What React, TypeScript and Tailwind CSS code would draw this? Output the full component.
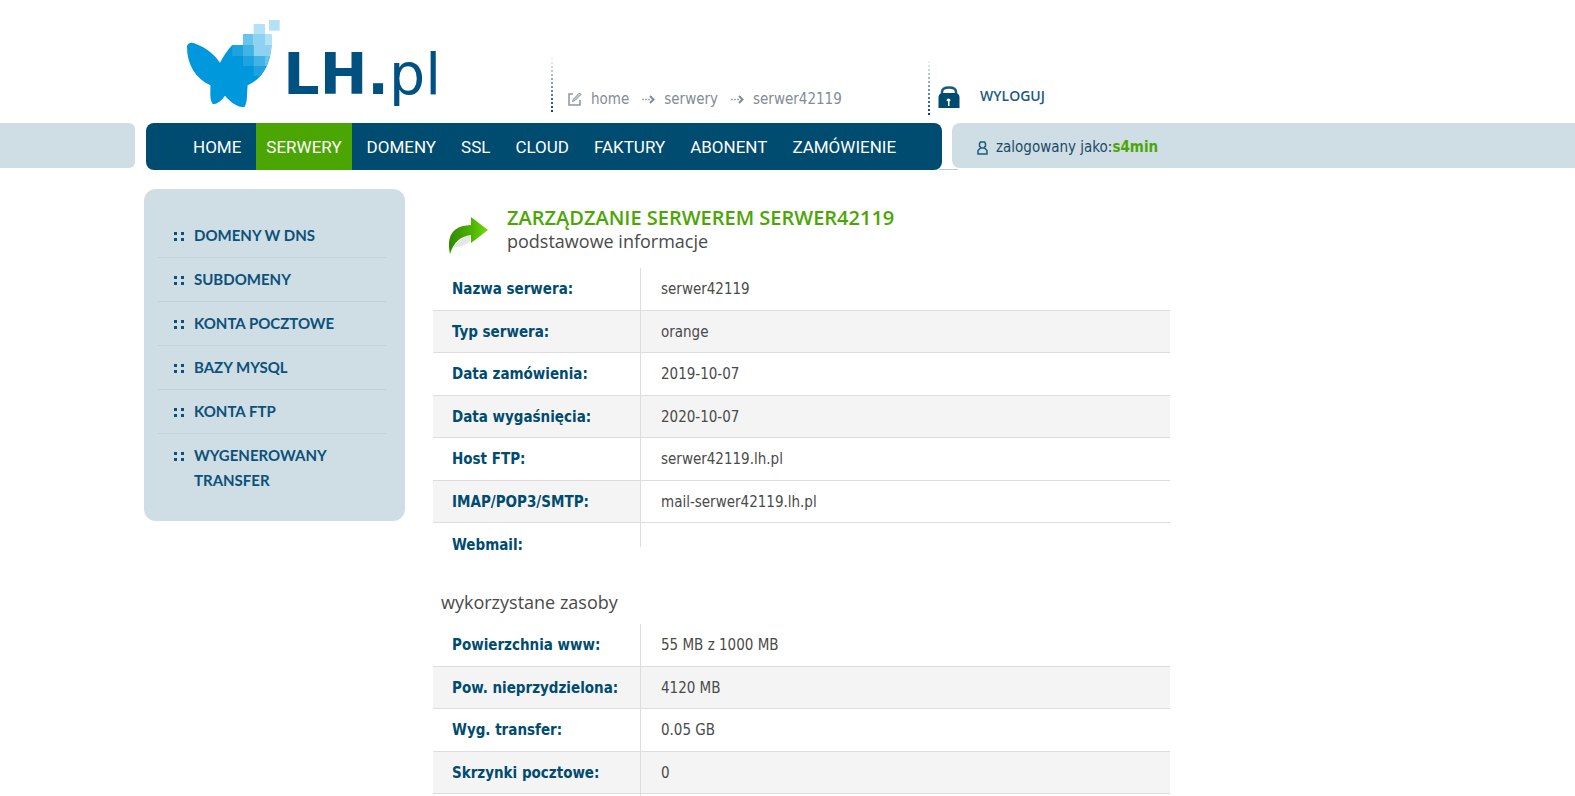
import { ReactNode } from "react";

type InfoRow = {
  label: string;
  value?: string;
  // grey background on the label / on the value
  shaded?: boolean;
  plainValue?: boolean;
};

const navItems = ["HOME", "SERWERY", "DOMENY", "SSL", "CLOUD", "FAKTURY", "ABONENT", "ZAMÓWIENIE"];

const sideItems = [
  "DOMENY W DNS",
  "SUBDOMENY",
  "KONTA POCZTOWE",
  "BAZY MYSQL",
  "KONTA FTP",
  "WYGENEROWANY TRANSFER",
];

const serverInfo: InfoRow[] = [
  { label: "Nazwa serwera:", value: "serwer42119" },
  { label: "Typ serwera:", value: "orange", shaded: true },
  { label: "Data zamówienia:", value: "2019-10-07" },
  { label: "Data wygaśnięcia:", value: "2020-10-07", shaded: true },
  { label: "Host FTP:", value: "serwer42119.lh.pl" },
  { label: "IMAP/POP3/SMTP:", value: "mail-serwer42119.lh.pl", shaded: true, plainValue: true },
  { label: "Webmail:" },
];

const usageInfo: InfoRow[] = [
  { label: "Powierzchnia www:", value: "55 MB z 1000 MB" },
  { label: "Pow. nieprzydzielona:", value: "4120 MB", shaded: true },
  { label: "Wyg. transfer:", value: "0.05 GB" },
  { label: "Skrzynki pocztowe:", value: "0", shaded: true },
  { label: "", value: "" },
];

const Logo = () => (
  <svg className="h-[89px] w-[259px]" viewBox="48 27 777 267" role="img" aria-label="LH.pl">
    <defs>
      <clipPath id="wing">
        <path d="M180 27H330V64H301L306 74C310 150 280 205 233 228L180 180Z" />
      </clipPath>
    </defs>
    <path
      fill="#0098dc"
      d="M51 108C55 97 66 97 76 101C110 113 135 135 150 158C160 140 172 120 187 105H304C302 168 272 210 233 226C230 255 233 275 224 290C205 295 180 275 165 257C155 270 145 282 128 282C118 270 122 245 121 226C75 205 50 160 51 108Z"
    />
    <g clipPath="url(#wing)">
      <rect x="297" y="30" width="32" height="32" fill="#b3e1f6" />
      <rect x="251" y="42" width="34" height="30" fill="#b3e1f6" />
      <rect x="219" y="72" width="32" height="33" fill="#68c4ec" />
      <rect x="251" y="72" width="34" height="33" fill="#8fd1f0" />
      <rect x="285" y="72" width="24" height="33" fill="#b3e1f6" />
      <rect x="187" y="105" width="32" height="33" fill="#1fa3df" />
      <rect x="219" y="105" width="32" height="33" fill="#42b3e5" />
      <rect x="251" y="105" width="34" height="33" fill="#8fd1f0" />
      <rect x="285" y="105" width="24" height="33" fill="#8fd1f0" />
      <rect x="219" y="138" width="32" height="30" fill="#1fa3df" />
      <rect x="251" y="138" width="34" height="30" fill="#42b3e5" />
      <rect x="285" y="138" width="24" height="30" fill="#68c4ec" />
      <rect x="251" y="168" width="34" height="30" fill="#1fa3df" />
    </g>
    <text x="340" y="253" fill="#00517f" fontSize="171" className="font-['DejaVu_Sans']">
      <tspan fontWeight="700">LH.</tspan>pl
    </text>
  </svg>
);

const DottedLine = ({ className = "" }: { className?: string }) => (
  <svg className={`h-[60px] w-[2px] shrink-0 ${className}`} viewBox="0 0 2 60" aria-hidden="true">
    {Array.from({ length: 15 }, (_, i) => (
      <rect key={i} y={i * 4 + 1} width="2" height="2" fill="#004b70" opacity={Math.min(1, i / 14)} />
    ))}
  </svg>
);

const EditIcon = () => (
  <svg className="h-[14px] w-[14px]" viewBox="0 0 14 14" fill="none" stroke="#8b979c" aria-hidden="true">
    <path d="M5 2H1V13H12V8" strokeWidth="1.5" />
    <path d="M4.500 9.500L5.500 7L11.500 1L13 2.500L7 8.500Z" fill="#c3cacd" />
  </svg>
);

const CrumbArrow = () => (
  <svg className="h-[9px] w-[13px]" viewBox="0 0 13 9" fill="none" stroke="#7f8d94" aria-hidden="true">
    <path d="M0 4.500H8" strokeWidth="1.500" strokeDasharray="2 1" opacity="0.7" />
    <path d="M8 1L11.500 4.500L8 8" strokeWidth="2" />
  </svg>
);

const LockIcon = () => (
  <svg className="h-[22px] w-[22px]" viewBox="0 0 22 22" aria-hidden="true">
    <path d="M4 9V6Q4 1.500 11 1.500T18 6V9" fill="none" stroke="#175a80" strokeWidth="2.500" />
    <path d="M0.500 11Q1 7 5 7H17Q21 7 21.500 11V22H0.500Z" fill="#004b70" />
    <path d="M8.500 14.500A2 2 0 1 1 12.500 14.500L11.500 15.500V20H10V15.500Z" fill="#fff" />
  </svg>
);

const UserIcon = () => (
  <svg className="h-[14px] w-[11px]" viewBox="0 0 11 14" fill="none" stroke="#1d5b7e" strokeWidth="1.500" aria-hidden="true">
    <path d="M3.500 1H7.500L8.500 2.500V5L7 7H4L2.500 5V2.500Z" />
    <path d="M3.500 7L1 9.500V13H10V9.500L7.500 7" />
  </svg>
);

const GreenArrow = () => (
  <svg className="h-[38px] w-[40px] shrink-0" viewBox="0 0 40 38" aria-hidden="true">
    <defs>
      <linearGradient id="arrow" x1="0" x2="1">
        <stop offset="0" stopColor="#2f8a00" />
        <stop offset="0.600" stopColor="#4eb400" />
        <stop offset="1" stopColor="#72da0b" />
      </linearGradient>
    </defs>
    <path d="M4 31Q9 21 22 18L21 24Q17 29 4 31Z" fill="#e6e6e6" />
    <path d="M22 0L39 13L22 26V18Q6 20 1 37Q-5 9 22 8Z" fill="url(#arrow)" />
  </svg>
);

const Crumb = ({ children }: { children: ReactNode }) => (
  <a href="#" className="text-[15px] leading-5 text-[#7f8d94]">
    {children}
  </a>
);

const InfoTable = ({ rows, label }: { rows: InfoRow[]; label: string }) => (
  <table aria-label={label} className="w-full border-separate border-spacing-0 text-left text-[15px] leading-5">
    <tbody>
      {rows.map((row, i) => {
        const last = i === rows.length - 1;
        const line = last ? "" : "border-b border-[#dddddd]";
        const height = row.shaded ? "h-[42px]" : "h-[43px]";
        return (
          <tr key={i} className={height}>
            <th
              scope="row"
              className={`w-[207px] p-0 pl-[19px] font-bold text-[#004b70] ${line} ${row.shaded ? "bg-[#f4f4f4]" : ""}`}
            >
              {row.label}
            </th>
            <td
              className={`p-0 align-top text-[#4a4a4a] ${line} ${row.shaded && !row.plainValue ? "bg-[#f4f4f4]" : ""}`}
            >
              <div
                className={`flex items-center border-l border-[#dddddd] pl-5 ${
                  row.value === undefined ? "h-6" : row.shaded ? "h-[41px]" : "h-[42px]"
                }`}
              >
                {row.value}
              </div>
            </td>
          </tr>
        );
      })}
    </tbody>
  </table>
);

const App = () => {
  return (
    <div className="h-screen overflow-hidden bg-white font-['DejaVu_Sans_Condensed','Noto_Sans',sans-serif]">
      <header>
        <div className="flex h-[123px] items-end pl-[186px]">
          <a href="#" className="mb-[15px] block shrink-0">
            <Logo />
          </a>
          <DottedLine className="mb-[10px] ml-[106px]" />
          <nav aria-label="breadcrumb" className="mb-3.5 ml-[15px] flex w-[360px] shrink-0 items-center">
            <EditIcon />
            <span className="w-[9px]" />
            <Crumb>home</Crumb>
            <span className="pr-[9px] pl-[13px]"><CrumbArrow /></span>
            <Crumb>serwery</Crumb>
            <span className="pr-[9px] pl-[13px]"><CrumbArrow /></span>
            <Crumb>serwer42119</Crumb>
          </nav>
          <DottedLine className="mb-[7px]" />
          <a
            href="#"
            className="mb-[15px] ml-2 flex items-start gap-5 font-['Open_Sans',sans-serif] text-[14px] leading-5 font-semibold text-[#1d5b7e]"
          >
            <LockIcon />
            WYLOGUJ
          </a>
        </div>

        <div className="flex h-[47px] items-start">
          <div className="h-[45px] w-[135px] shrink-0 rounded-r-md bg-[#cfdde4]" />
          <nav className="relative ml-[11px] flex h-[47px] w-[796px] shrink-0 gap-[5px] rounded-lg bg-[#004b70] pl-[37px] font-['Roboto',sans-serif] text-[17px] leading-[48px] text-white">
            {navItems.map((item) => (
              <a key={item} href="#" className={`h-[47px] px-2.5 ${item === "SERWERY" ? "bg-[#4ba604]" : ""}`}>
                {item}
              </a>
            ))}
            <span className="absolute -right-4 bottom-0 h-px w-[19px] bg-[#b9cbd5]" />
          </nav>
          <div className="ml-2.5 flex h-[45px] flex-1 items-center rounded-l-lg bg-[#cfdde4] pt-1 pl-[25px] text-[15px] text-[#1d4a66]">
            <UserIcon />
            <span className="ml-2 whitespace-nowrap">
              zalogowany jako:<b className="text-[#4ba604]">s4min</b>
            </span>
          </div>
        </div>
      </header>

      <div className="flex items-start pl-36">
        <aside className="mt-[19px] w-[261px] shrink-0 rounded-xl bg-[#cfdde4] px-[14px] pt-[25px] pb-[19px]">
          <ul className="mr-[5px] font-['Lato',sans-serif] text-[15px] leading-[25px] font-bold text-[#0b517a]">
            {sideItems.map((item) => (
              <li key={item} className="border-b border-[#c3d3da] pt-[9px] pb-[9px] last:border-0">
                <a href="#" className="flex pl-4">
                  <svg className="mt-2 mr-2.5 h-[10px] w-[10px] shrink-0" viewBox="0 0 10 10" fill="#0b517a" aria-hidden="true">
                    <path d="M0 1h3v3H0zM7 1h3v3H7zM0 7h3v3H0zM7 7h3v3H7z" />
                  </svg>
                  <span className="max-w-40">{item}</span>
                </a>
              </li>
            ))}
          </ul>
        </aside>

        <main className="ml-7 max-w-[737px] flex-1 pt-[35px]">
          <div className="flex h-[63px] gap-[18px] pl-4 font-['Open_Sans',sans-serif]">
            <div className="pt-3">
              <GreenArrow />
            </div>
            <div>
              <h1 className="text-[20px] leading-[26px] font-semibold text-[#4ba604]">ZARZĄDZANIE SERWEREM SERWER42119</h1>
              <h2 className="text-[18px] leading-5 text-[#4a4a4a]">podstawowe informacje</h2>
            </div>
          </div>
          <InfoTable rows={serverInfo} label="podstawowe informacje" />
          <h2 className="mt-6 mb-2.5 pl-2 font-['Open_Sans',sans-serif] text-[18px] leading-6 text-[#4a4a4a]">
            wykorzystane zasoby
          </h2>
          <InfoTable rows={usageInfo} label="wykorzystane zasoby" />
        </main>
      </div>
    </div>
  );
};

export default App;
